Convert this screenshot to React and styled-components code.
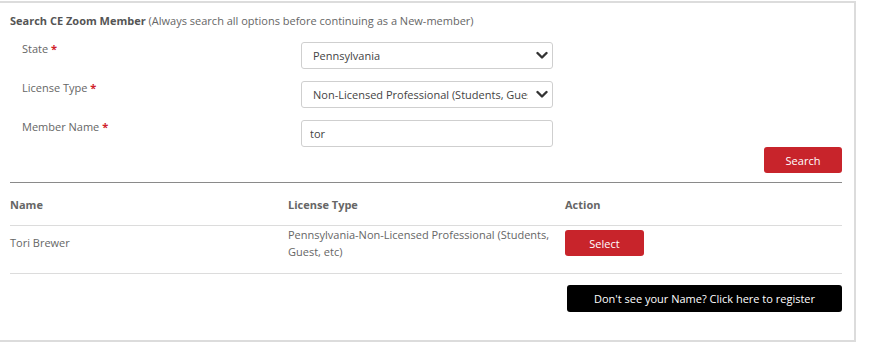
import React from "react";
import styled, { createGlobalStyle } from "styled-components";

const Global = createGlobalStyle`
  html, body { margin: 0; padding: 0; background: #fff; }
  body { font-family: "Open Sans", "Noto Sans", Arial, sans-serif; }
  * { box-sizing: border-box; }
`;

const Card = styled.div`
  margin-top: 1px;
  width: 856px;
  height: 341px;
  border: 2px solid #dcdcdc;
  border-left: none;
  padding: 11px 12px 0 10px;
  background: #fff;
`;

const Title = styled.div`
  font-size: 11px;
  line-height: 14px;
  color: #666;
  b { color: #555; font-weight: 700; }
`;

const Form = styled.div`
  display: grid;
  grid-template-columns: 279px 252px;
  row-gap: 12px;
  padding-left: 12px;
  margin-top: 14px;
`;

const Label = styled.label`
  font-size: 11px;
  line-height: 14px;
  color: #666;
  span { color: #d0202a; font-weight: 700; }
`;

const SelectWrap = styled.div`
  position: relative;
  height: 27px;
`;

const Select = styled.select`
  appearance: none;
  -webkit-appearance: none;
  width: 100%;
  height: 27px;
  border: 1px solid #cfcfcf;
  border-radius: 3px;
  background: #fff;
  font-family: inherit;
  font-size: 11px;
  color: #444;
  padding: 0 24px 0 11px;
  outline: none;
`;

const Chevron = styled.svg`
  position: absolute;
  right: 5px;
  top: 9px;
  width: 12px;
  height: 9px;
  pointer-events: none;
`;

const Input = styled.input`
  width: 100%;
  height: 27px;
  border: 1px solid #cfcfcf;
  border-radius: 3px;
  font-family: inherit;
  font-size: 11px;
  color: #444;
  padding: 0 8px;
  outline: none;
`;

const ButtonRow = styled.div`
  display: flex;
  justify-content: flex-end;
  margin-top: 0;
`;

const Button = styled.button`
  height: ${(p) => p.$h || 26}px;
  width: ${(p) => p.$w}px;
  border: none;
  border-radius: 3px;
  background: ${(p) => (p.$dark ? "#000" : "#c8242b")};
  color: #fff;
  font-family: inherit;
  font-size: 11px;
  cursor: pointer;
  padding: 0;
`;

const Divider = styled.hr`
  margin: 9px 0 0;
  border: none;
  border-top: 1px solid ${(p) => p.$c};
  height: 0;
`;

const Row = styled.div`
  display: grid;
  grid-template-columns: 278px 277px 277px;
  align-items: ${(p) => (p.$head ? "center" : "start")};
  height: ${(p) => p.$h}px;
  padding-top: ${(p) => p.$pt || 0}px;
  border-bottom: 1px solid #dcdcdc;
  font-size: 11px;
  line-height: 17px;
  color: #666;
  font-weight: ${(p) => (p.$head ? 700 : 400)};
`;

const Cell = styled.div`
  padding-top: ${(p) => p.$pt || 0}px;
  padding-right: 10px;
`;

const Footer = styled.div`
  display: flex;
  justify-content: flex-end;
  margin-top: 11px;
`;

const ChevronIcon = () => (
  <Chevron viewBox="0 0 12 9">
    <path d="M1.5 2 L6 6.5 L10.5 2" fill="none" stroke="#333" strokeWidth="2.4" strokeLinecap="round" strokeLinejoin="round" />
  </Chevron>
);

export default function App() {
  return (
    <>
      <Global />
      <Card>
        <Title>
          <b>Search CE Zoom Member</b> (Always search all options before continuing as a New-member)
        </Title>
        <Form>
          <Label>State <span>*</span></Label>
          <SelectWrap>
            <Select defaultValue="PA">
              <option value="PA">Pennsylvania</option>
            </Select>
            <ChevronIcon />
          </SelectWrap>
          <Label>License Type <span>*</span></Label>
          <SelectWrap>
            <Select defaultValue="NL">
              <option value="NL">Non-Licensed Professional (Students, Guest, etc)</option>
            </Select>
            <ChevronIcon />
          </SelectWrap>
          <Label>Member Name <span>*</span></Label>
          <Input defaultValue="tor" />
        </Form>
        <ButtonRow>
          <Button $w={78}>Search</Button>
        </ButtonRow>
        <Divider $c="#8a8a8a" />
        <Row $head $h={43}>
          <Cell>Name</Cell>
          <Cell>License Type</Cell>
          <Cell>Action</Cell>
        </Row>
        <Row $h={48}>
          <Cell $pt={8}>Tori Brewer</Cell>
          <Cell>Pennsylvania-Non-Licensed Professional (Students, Guest, etc)</Cell>
          <Cell $pt={4}><Button $w={79}>Select</Button></Cell>
        </Row>
        <Footer>
          <Button $dark $w={275} $h={27}>Don't see your Name? Click here to register</Button>
        </Footer>
      </Card>
    </>
  );
}
